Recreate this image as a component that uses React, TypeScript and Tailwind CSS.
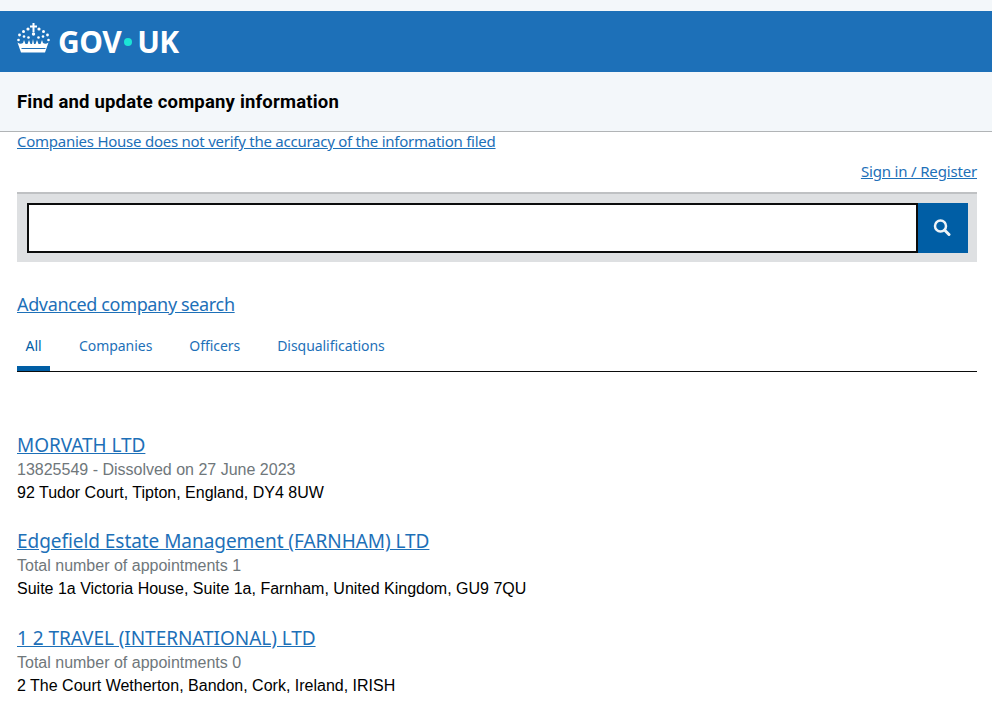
import React from "react";

const results = [
  {
    title: "MORVATH LTD",
    meta: "13825549 - Dissolved on 27 June 2023",
    address: "92 Tudor Court, Tipton, England, DY4 8UW",
  },
  {
    title: "Edgefield Estate Management (FARNHAM) LTD",
    meta: "Total number of appointments 1",
    address: "Suite 1a Victoria House, Suite 1a, Farnham, United Kingdom, GU9 7QU",
  },
  {
    title: "1 2 TRAVEL (INTERNATIONAL) LTD",
    meta: "Total number of appointments 0",
    address: "2 The Court Wetherton, Bandon, Cork, Ireland, IRISH",
  },
];

const tabs = ["All", "Companies", "Officers", "Disqualifications"];

const Crown: React.FC = () => (
  <svg width="33" height="30" viewBox="0 0 33 30" fill="white" className="mb-[7px] shrink-0">
    {/* cross */}
    <path d="M15.5 0h2v2.500h2.500v2h-2.500v4.500h-2v-4.500H13v-2h2.500z" />
    {/* jewels */}
    <circle cx="16.500" cy="11" r="1.700" />
    <circle cx="11" cy="6" r="1.600" />
    <circle cx="22" cy="6" r="1.600" />
    <circle cx="6.500" cy="8.500" r="1.500" />
    <circle cx="26.500" cy="8.500" r="1.500" />
    <circle cx="2.500" cy="12" r="1.400" />
    <circle cx="30.500" cy="12" r="1.400" />
    <circle cx="7" cy="13.500" r="1.300" />
    <circle cx="26" cy="13.500" r="1.300" />
    <circle cx="1.500" cy="17" r="1.300" />
    <circle cx="31.500" cy="17" r="1.300" />
    <circle cx="11.500" cy="14.500" r="1.300" />
    <circle cx="21.500" cy="14.500" r="1.300" />
    {/* band */}
    <path d="M0.500 19.500c2 1.500 4 1.500 5.500 .5l1-3 1.500 4h2l1.500-4 1.500 4h1.500l1-5 1 5h1.500l1.500-4 1.500 4h2l1.500-4 1 3c1.500 1 3.500 1 5.500-.5l-3.500 10H4z" />
    <path d="M4.500 25.500h24" stroke="#1d70b8" strokeWidth="1" />
  </svg>
);

const SearchIcon: React.FC = () => (
  <svg width="18" height="18" viewBox="0 0 18 18" fill="none" stroke="#eef3f7" strokeWidth="2.500" className="-translate-x-[1px] -translate-y-[0.5px]">
    <circle cx="7.500" cy="7.500" r="5.500" />
    <path d="M11.800 11.800l4.200 4.200" strokeWidth="3" strokeLinecap="round" />
  </svg>
);

export default function App() {
  return (
    <div className="min-h-[710px] bg-white font-['Noto_Sans',sans-serif] text-black">
      <div className="h-[11px] bg-[#f3f7fa]" />
      <header className="flex h-[61px] items-center gap-[9px] bg-[#1d70b8] px-[17px]">
        <Crown />
        <div className="-ml-[1px] flex items-center text-[30px] leading-none font-bold tracking-[-0.5px] text-white">
          <span>GOV</span>
          <span className="mr-[5px] ml-[3px] h-[8px] w-[8px] rounded-full bg-[#1ce4d6]" />
          <span>UK</span>
        </div>
      </header>
      <div className="flex h-[60px] items-center border-b border-[#b1b4b6] bg-[#f3f7fa] px-[17px] pt-[2px]">
        <span className="font-['Roboto',sans-serif] text-[18.5px] font-bold tracking-[0.19px]">Find and update company information</span>
      </div>

      <main className="pr-[15px] pl-[17px]">
        <a className="-mt-[1px] block text-[15px] leading-[20px] tracking-[-0.25px] text-[#1d70b8] underline">
          Companies House does not verify the accuracy of the information filed
        </a>
        <div className="mt-[10px] flex justify-end">
          <a className="text-[15px] leading-[20px] tracking-[-0.17px] text-[#1d70b8] underline">Sign in / Register</a>
        </div>

        <div className="mt-[11px] flex h-[70px] items-center border-t-2 border-[#bfc1c3] bg-[#dee0e2] pr-[9px] pl-[10px]">
          <div className="h-[50px] flex-1 border-2 border-[#0b0c0c] bg-white" />
          <div className="flex h-[50px] w-[50px] items-center justify-center bg-[#005ea5]">
            <SearchIcon />
          </div>
        </div>

        <a className="mt-[30px] block text-[18px] leading-[25px] tracking-[-0.35px] text-[#1d70b8] underline">
          Advanced company search
        </a>

        <nav className="mt-[15px] flex h-[40px] gap-[19px] border-b border-[#0b0c0c] text-[14px] leading-[20px] tracking-[-0.05px]">
          {tabs.map((tab, i) => (
            <div
              key={tab}
              className={
                i === 0
                  ? "mr-[1px] w-[33px] border-b-[5px] border-[#005ea5] pt-[4px] text-center text-[#005ea5]"
                  : "px-[9px] pt-[4px] text-[#1d70b8]"
              }
            >
              {tab}
            </div>
          ))}
        </nav>

        <div className="mt-[61px] flex flex-col gap-[25.25px] font-['Liberation_Sans',sans-serif] text-[16px] leading-[23px]">
          {results.map((r) => (
            <div key={r.title}>
              <a className="block font-['Noto_Sans',sans-serif] text-[19px] leading-[25px] tracking-[-0.05px] text-[#1d70b8] underline">
                {r.title}
              </a>
              <p className="text-[#6f777b]">{r.meta}</p>
              <p>{r.address}</p>
            </div>
          ))}
        </div>
      </main>
    </div>
  );
}
